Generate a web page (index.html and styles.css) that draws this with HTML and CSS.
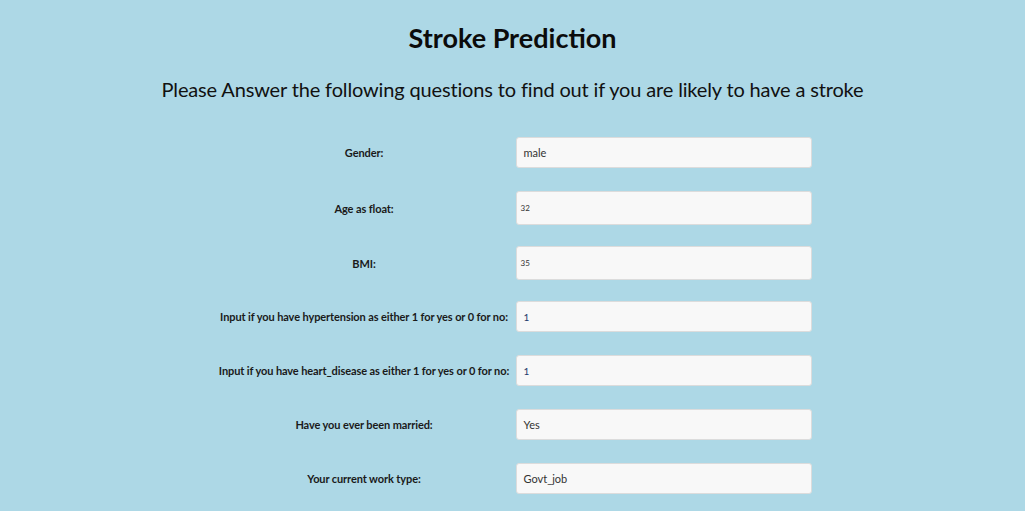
FILE: index.html
```html
<!DOCTYPE html>
<html>
<head>
<meta charset="utf-8">
<link rel="stylesheet" href="styles.css">
</head>
<body>
<main class="page">
  <h1 class="title">Stroke Prediction</h1>
  <p class="subtitle">Please Answer the following questions to find out if you are likely to have a stroke</p>
  <form class="form">
    <div class="row">
      <label class="label">Gender:</label>
      <div class="field"><span class="val val-text">male</span></div>
    </div>
    <div class="row">
      <label class="label">Age as float:</label>
      <div class="field field-num"><span class="val val-small">32</span></div>
    </div>
    <div class="row row-tight">
      <label class="label">BMI:</label>
      <div class="field field-num"><span class="val val-small">35</span></div>
    </div>
    <div class="row row-tight">
      <label class="label">Input if you have hypertension as either 1 for yes or 0 for no:</label>
      <div class="field"><span class="val val-blue">1</span></div>
    </div>
    <div class="row">
      <label class="label">Input if you have heart_disease as either 1 for yes or 0 for no:</label>
      <div class="field"><span class="val val-blue">1</span></div>
    </div>
    <div class="row">
      <label class="label">Have you ever been married:</label>
      <div class="field"><span class="val val-text">Yes</span></div>
    </div>
    <div class="row">
      <label class="label">Your current work type:</label>
      <div class="field"><span class="val val-text">Govt_job</span></div>
    </div>
  </form>
</main>
</body>
</html>
```

FILE: styles.css
```css
html, body {
  margin: 0;
  padding: 0;
  background: #add8e6;
  font-family: Lato, "Noto Sans", sans-serif;
  color: #111;
}
.page {
  display: flex;
  flex-direction: column;
  align-items: center;
  padding-top: 20px;
}
.title {
  margin: 0;
  font-size: 27px;
  line-height: 36px;
  font-weight: 700;
  color: #0b0b0b;
}
.subtitle {
  margin: 18px 0 0 0;
  font-size: 20px;
  letter-spacing: -0.15px;
  line-height: 30px;
  font-weight: 400;
  color: #111;
}
.form {
  margin-top: 33px;
  width: 600px;
  display: flex;
  flex-direction: column;
  gap: 23px;
}
.row {
  display: grid;
  grid-template-columns: 303px 296px;
  align-items: center;
}
.row-tight {
  margin-top: -2px;
}
.label {
  text-align: center;
  white-space: nowrap;
  font-size: 11px;
  letter-spacing: -0.1px;
  font-weight: 700;
  color: #1a1a1a;
}
.field {
  height: 31px;
  box-sizing: border-box;
  background: #f8f8f8;
  border: 1px solid #dcdcdc;
  border-radius: 3px;
  display: flex;
  align-items: center;
  padding-left: 7px;
}
.field-num {
  height: 34px;
  padding-left: 4px;
}
.val {
  color: #333;
}
.val-text { font-size: 11px; }
.val-small { font-size: 8px; }
.val-blue { font-size: 10px; color: #1f3a6b; }
```
